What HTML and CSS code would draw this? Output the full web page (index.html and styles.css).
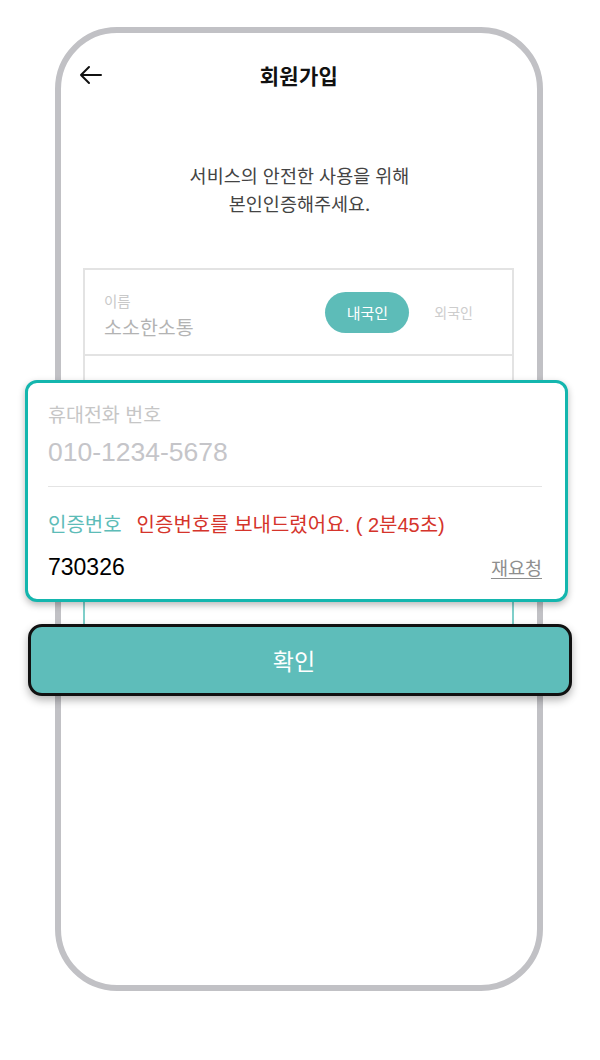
FILE: index.html
```html
<!DOCTYPE html>
<html lang="ko">
<head>
<meta charset="utf-8">
<title>회원가입</title>
<link rel="stylesheet" href="styles.css">
</head>
<body>
<div class="stage">
  <div class="phone">
    <header class="header">
      <div class="back">
        <svg width="24" height="20" viewBox="0 0 24 20" aria-hidden="true">
          <path d="M2 10 H22 M2 10 L10 2 M2 10 L10 18" fill="none" stroke="#111" stroke-width="2" stroke-linecap="round" stroke-linejoin="round"/>
        </svg>
      </div>
      <h1 class="title">회원가입</h1>
      <div></div>
    </header>
    <p class="intro">서비스의 안전한 사용을 위해<br>본인인증해주세요.</p>
    <div class="form">
      <div class="sec sec-name">
        <div class="name-col">
          <span class="lbl">이름</span>
          <span class="name-val">소소한소통</span>
        </div>
        <div class="toggle">
          <span class="pill">내국인</span>
          <span class="opt">외국인</span>
        </div>
      </div>
      <div class="sec sec-phone"></div>
      <div class="sec sec-code"></div>
    </div>
  </div>

  <div class="focus-card">
    <div class="ph-label">휴대전화 번호</div>
    <div class="ph-num">010-1234-5678</div>
    <div class="rule"></div>
    <div class="code-row">
      <span class="code-lbl">인증번호</span>
      <span class="code-msg">인증번호를 보내드렸어요. ( 2분45초)</span>
    </div>
    <div class="code-input">
      <span class="code-val">730326</span>
      <span class="resend">재요청</span>
    </div>
  </div>

  <button class="confirm" type="button">확인</button>
</div>
</body>
</html>
```

FILE: styles.css
```css
* { box-sizing: border-box; }
html, body { margin: 0; padding: 0; background: #fff; }
body {
  font-family: "Liberation Sans", "Noto Sans CJK KR", sans-serif;
  color: #111;
}
.stage {
  position: relative;
  width: 600px;
  height: 1060px;
  padding: 27px 0 0 55px;
}
.phone {
  width: 488px;
  height: 964px;
  border: 6px solid #c1c1c5;
  border-radius: 62px;
  display: flex;
  flex-direction: column;
}
.header {
  height: 84px;
  display: grid;
  grid-template-columns: 1fr auto 1fr;
  align-items: center;
  padding: 0 19px;
}
.back { display: flex; align-items: center; margin-left: -1px; }
.back svg { display: block; }
.title {
  margin: 0;
  font-family: "Noto Sans CJK KR", sans-serif;
  font-size: 21px;
  font-weight: 700;
  color: #111;
  letter-spacing: 0.3px;
}
.intro {
  margin: 44px 0 0;
  text-align: center;
  font-family: "Noto Sans CJK KR", sans-serif;
  font-size: 18.5px;
  line-height: 28px;
  color: #444;
  padding-left: 1px;
}
.form {
  margin: 51px 23px 0 22px;
  display: flex;
  flex-direction: column;
}
.sec {
  border: 2px solid #e3e3e3;
  border-top: none;
}
.sec-name {
  border-top: 2px solid #e3e3e3;
  height: 88px;
  display: flex;
  align-items: center;
  justify-content: space-between;
  padding: 0 39px 0 19px;
}
.name-col { display: flex; flex-direction: column; padding-top: 6px; }
.lbl {
  font-family: "Noto Sans CJK KR", sans-serif;
  font-size: 14.5px;
  line-height: 20px;
  color: #c9c9c9;
}
.name-val {
  font-family: "Noto Sans CJK KR", sans-serif;
  font-size: 19.5px;
  line-height: 26px;
  color: #b3b3b3;
  margin-top: 3px;
}
.toggle { display: flex; align-items: center; gap: 25px; }
.pill {
  width: 84px;
  height: 41px;
  border-radius: 21px;
  background: #5dbcb8;
  color: #fff;
  font-family: "Noto Sans CJK KR", sans-serif;
  font-size: 15px;
  display: flex;
  align-items: center;
  justify-content: center;
}
.opt {
  font-family: "Noto Sans CJK KR", sans-serif;
  font-size: 14px;
  color: #cdcdcd;
}
.sec-phone { height: 134px; }
.sec-code { height: 190px; border-color: #7fcfca; border-width: 0 2px 2px; }

.focus-card {
  position: absolute;
  left: 25px;
  top: 380px;
  width: 543px;
  height: 222px;
  background: #fff;
  border: 3px solid #14b6ae;
  border-radius: 12px;
  box-shadow: 0 3px 7px rgba(0, 0, 0, 0.28);
  padding: 19px 23px 0 20px;
  display: flex;
  flex-direction: column;
}
.ph-label {
  font-family: "Noto Sans CJK KR", sans-serif;
  font-size: 19.5px;
  line-height: 24px;
  color: #c6c6c6;
}
.ph-num {
  margin-top: 11px;
  font-size: 26.5px;
  line-height: 30px;
  color: #c5c5c9;
}
.rule {
  margin-top: 19px;
  height: 1px;
  background: #e4e4e4;
}
.code-row {
  margin-top: 26px;
  display: flex;
  align-items: center;
  gap: 15px;
  line-height: 24px;
  font-size: 20px;
}
.code-lbl { color: #5dbcb8; }
.code-msg { color: #d5342b; }
.code-input {
  margin-top: 17px;
  display: flex;
  justify-content: space-between;
  align-items: center;
  line-height: 26px;
}
.code-val { font-size: 23px; color: #000; }
.resend {
  font-family: "Noto Sans CJK KR", sans-serif;
  font-size: 18.5px;
  color: #8e8e8e;
  text-decoration: underline;
  text-underline-offset: 3px;
}
.confirm {
  position: absolute;
  left: 28px;
  top: 624px;
  width: 544px;
  height: 72px;
  margin: 0;
  padding: 0 12px 0 0;
  background: #5ebdba;
  border: 3px solid #111;
  border-radius: 14px;
  box-shadow: 0 4px 8px rgba(0, 0, 0, 0.3);
  color: #fff;
  font-family: "Noto Sans CJK KR", sans-serif;
  font-size: 23px;
  cursor: pointer;
}
```
